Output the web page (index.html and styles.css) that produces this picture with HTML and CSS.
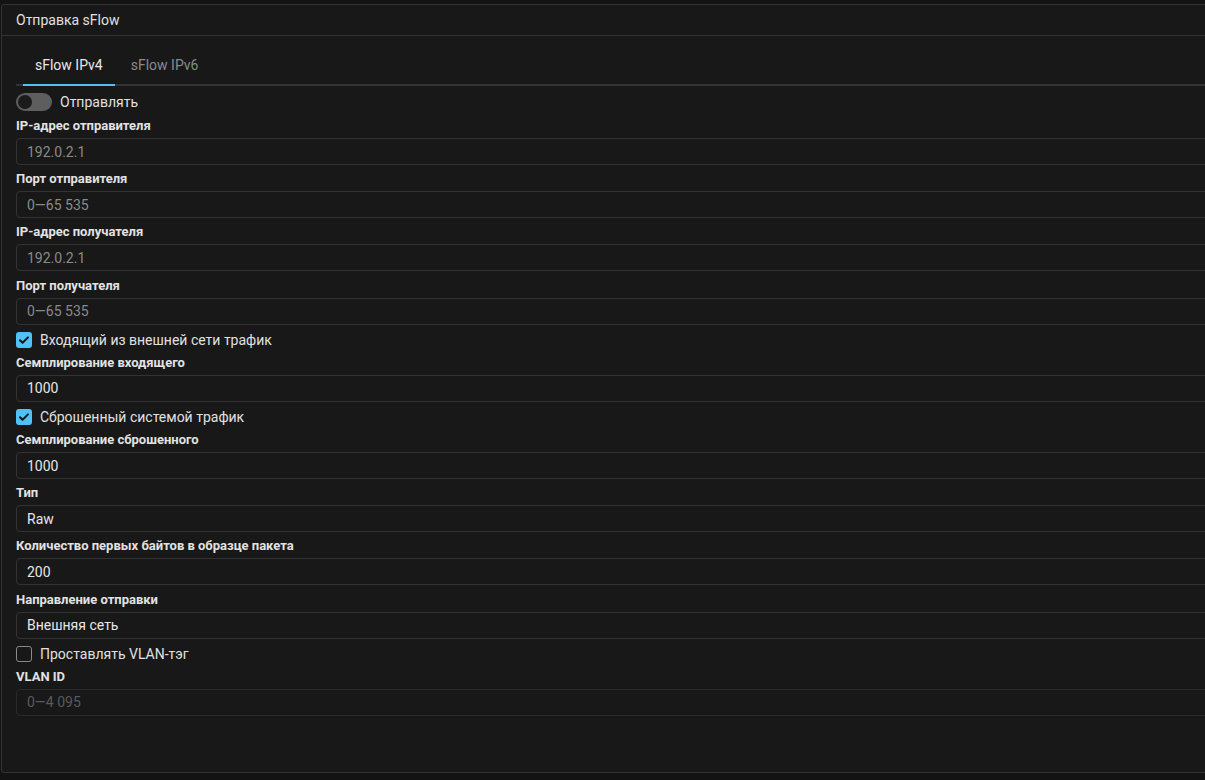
FILE: index.html
```html
<!DOCTYPE html>
<html lang="ru">
<head>
    <meta charset="UTF-8">
    <title>Отправка sFlow</title>
    <link rel="stylesheet" href="styles.css">
</head>
<body>
    <div class="card">
        <div class="card-header">Отправка sFlow</div>
        <div class="card-body">
            <div class="tabs">
                <div class="tab active">sFlow IPv4</div>
                <div class="tab">sFlow IPv6</div>
            </div>

            <div class="form">
                <label class="switch-row">
                    <span class="switch"><span class="knob"></span></span>
                    <span>Отправлять</span>
                </label>

                <div class="field">
                    <div class="field-label">IP-адрес отправителя</div>
                    <input class="input" type="text" placeholder="192.0.2.1">
                </div>
                <div class="field">
                    <div class="field-label">Порт отправителя</div>
                    <input class="input" type="text" placeholder="0—65 535">
                </div>
                <div class="field">
                    <div class="field-label">IP-адрес получателя</div>
                    <input class="input" type="text" placeholder="192.0.2.1">
                </div>
                <div class="field">
                    <div class="field-label">Порт получателя</div>
                    <input class="input" type="text" placeholder="0—65 535">
                </div>

                <label class="check-row">
                    <span class="checkbox checked">
                        <svg viewBox="0 0 16 16" width="16" height="16"><path d="M4 8.2l2.6 2.6L12 5.4" fill="none" stroke="#161616" stroke-width="2" stroke-linecap="round" stroke-linejoin="round"/></svg>
                    </span>
                    <span>Входящий из внешней сети трафик</span>
                </label>
                <div class="field">
                    <div class="field-label">Семплирование входящего</div>
                    <input class="input" type="text" value="1000">
                </div>

                <label class="check-row">
                    <span class="checkbox checked">
                        <svg viewBox="0 0 16 16" width="16" height="16"><path d="M4 8.2l2.6 2.6L12 5.4" fill="none" stroke="#161616" stroke-width="2" stroke-linecap="round" stroke-linejoin="round"/></svg>
                    </span>
                    <span>Сброшенный системой трафик</span>
                </label>
                <div class="field">
                    <div class="field-label">Семплирование сброшенного</div>
                    <input class="input" type="text" value="1000">
                </div>

                <div class="field">
                    <div class="field-label">Тип</div>
                    <div class="input select">Raw</div>
                </div>
                <div class="field">
                    <div class="field-label">Количество первых байтов в образце пакета</div>
                    <input class="input" type="text" value="200">
                </div>
                <div class="field">
                    <div class="field-label">Направление отправки</div>
                    <div class="input select">Внешняя сеть</div>
                </div>

                <label class="check-row">
                    <span class="checkbox"></span>
                    <span>Проставлять VLAN-тэг</span>
                </label>
                <div class="field">
                    <div class="field-label">VLAN ID</div>
                    <input class="input" type="text" placeholder="0—4 095" disabled>
                </div>
            </div>
        </div>
    </div>
</body>
</html>
```

FILE: styles.css
```css
* {
    margin: 0;
    padding: 0;
    box-sizing: border-box;
}

body {
    background: #131313;
    font-family: Roboto, 'Liberation Sans', sans-serif;
    color: #dedede;
    overflow: hidden;
    padding: 4px 0 0 1px;
}

.card {
    width: 1230px;
    height: 769px;
    background: #181818;
    border: 1px solid #333;
    border-radius: 3px;
}

.card-header {
    height: 31px;
    padding: 0 14px;
    display: flex;
    align-items: center;
    font-size: 14px;
    color: #e0e0e0;
    border-bottom: 1px solid #333;
}

.card-body {
    padding: 10px 0 0 14px;
}

.tabs {
    display: flex;
    gap: 4px;
    padding-left: 7px;
    border-bottom: 2px solid #333;
    height: 40px;
}

.tab {
    padding: 0 12px;
    display: flex;
    align-items: center;
    font-size: 14px;
    color: #8a8a8a;
    margin-bottom: -2px;
    border-bottom: 2px solid transparent;
}

.tab.active {
    color: #e8e8e8;
    border-bottom-color: #4fc3f7;
}

.form {
    display: flex;
    flex-direction: column;
    gap: 6.15px;
    padding-top: 6px;
}

.switch-row,
.check-row {
    display: flex;
    align-items: center;
    gap: 8px;
    height: 18px;
    font-size: 14px;
    color: #e0e0e0;
}

.switch-row {
    height: 20px;
}

.switch {
    position: relative;
    width: 36px;
    height: 18px;
    border-radius: 9px;
    background: #5e5e5e;
}

.knob {
    position: absolute;
    left: 2px;
    top: 2px;
    width: 14px;
    height: 14px;
    border-radius: 50%;
    background: #1b1b1b;
}

.checkbox {
    width: 16px;
    height: 16px;
    border-radius: 3px;
    border: 1.5px solid #8a8a8a;
    display: flex;
}

.checkbox.checked {
    border: none;
    background: #4fc3f7;
}

.field {
    display: flex;
    flex-direction: column;
    gap: 4px;
}

.field-label {
    font-size: 13px;
    font-weight: bold;
    line-height: 16px;
    color: #e2e2e2;
}

.input {
    display: flex;
    align-items: center;
    width: 100%;
    height: 27px;
    padding: 0 10px;
    background: transparent;
    border: 1px solid #333;
    border-radius: 4px;
    font-family: inherit;
    font-size: 14px;
    color: #e6e6e6;
    outline: none;
}

.input::placeholder {
    color: #8a8a8a;
}

.input:disabled {
    border-color: #2a2a2a;
}

.input:disabled::placeholder {
    color: #5a5a5a;
}
```
